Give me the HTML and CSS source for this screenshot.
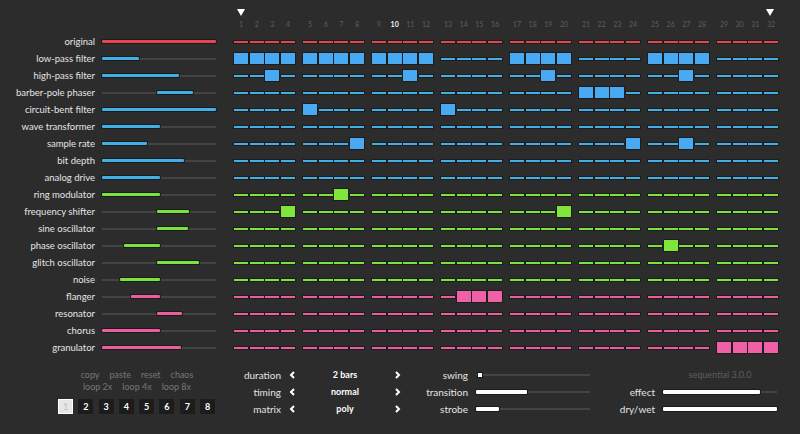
FILE: index.html
```html
<!DOCTYPE html>
<html>
<head>
  <title>Sequential 3.0.0</title>
  <meta charset="UTF-8" />
  <meta name="viewport" content="width=device-width, initial-scale=1.0" />
  <link rel="stylesheet" href="styles.css">
</head>
<body>
  <div class="app">
    <!-- playhead markers and step numbers -->
    <div class="head">
      <div class="markers">
        <svg class="marker" width="8" height="7" viewBox="0 0 8 7"><polygon points="0,0 8,0 4,7" /></svg>
        <svg class="marker" width="8" height="7" viewBox="0 0 8 7"><polygon points="0,0 8,0 4,7" /></svg>
      </div>
      <div class="steps numbers" id="numbers"></div>
    </div>

    <!-- effect rows are built by the script below -->
    <div id="rows"></div>

    <div class="bottom">
      <div class="actions">
        <div class="links"><span>copy</span><span>paste</span><span>reset</span><span>chaos</span></div>
        <div class="links"><span>loop 2x</span><span>loop 4x</span><span>loop 8x</span></div>
        <div class="banks">
          <button class="bank on">1</button>
          <button class="bank">2</button>
          <button class="bank">3</button>
          <button class="bank">4</button>
          <button class="bank">5</button>
          <button class="bank">6</button>
          <button class="bank">7</button>
          <button class="bank">8</button>
        </div>
      </div>

      <div class="options">
        <span class="lbl">duration</span>
        <svg class="arrow" width="6" height="8" viewBox="0 0 6 8"><polyline points="5,1 2,4 5,7" /></svg>
        <span class="val">2 bars</span>
        <svg class="arrow" width="6" height="8" viewBox="0 0 6 8"><polyline points="1,1 4,4 1,7" /></svg>

        <span class="lbl">timing</span>
        <svg class="arrow" width="6" height="8" viewBox="0 0 6 8"><polyline points="5,1 2,4 5,7" /></svg>
        <span class="val">normal</span>
        <svg class="arrow" width="6" height="8" viewBox="0 0 6 8"><polyline points="1,1 4,4 1,7" /></svg>

        <span class="lbl">matrix</span>
        <svg class="arrow" width="6" height="8" viewBox="0 0 6 8"><polyline points="5,1 2,4 5,7" /></svg>
        <span class="val">poly</span>
        <svg class="arrow" width="6" height="8" viewBox="0 0 6 8"><polyline points="1,1 4,4 1,7" /></svg>
      </div>

      <div class="mix">
        <span class="lbl">swing</span>
        <div class="track"><div class="knob"></div></div>
        <span class="lbl">transition</span>
        <div class="track"><div class="fill" style="width: 51px"></div></div>
        <span class="lbl">strobe</span>
        <div class="track"><div class="fill" style="width: 23px"></div></div>
      </div>

      <div class="mix out">
        <span class="lbl"></span>
        <span class="version">sequential 3.0.0</span>
        <span class="lbl">effect</span>
        <div class="track"><div class="fill" style="width: 97px"></div></div>
        <span class="lbl">dry/wet</span>
        <div class="track"><div class="fill" style="width: 114px"></div></div>
      </div>
    </div>
  </div>

  <script>
    // name, colour, slider offset, slider width, active steps
    const effects = [
      ["original", "red", 0, 114, []],
      ["low-pass filter", "blue", 0, 37, [1,2,3,4,5,6,7,8,9,10,11,12,17,18,19,20,25,26,27,28]],
      ["high-pass filter", "blue", 0, 77, [3,11,19,27]],
      ["barber-pole phaser", "blue", 55, 36, [21,22,23]],
      ["circuit-bent filter", "blue", 0, 114, [5,13]],
      ["wave transformer", "blue", 0, 58, []],
      ["sample rate", "blue", 0, 45, [8,24,27]],
      ["bit depth", "blue", 0, 82, []],
      ["analog drive", "blue", 0, 58, []],
      ["ring modulator", "green", 0, 58, [7]],
      ["frequency shifter", "green", 55, 32, [4,20]],
      ["sine oscillator", "green", 55, 31, []],
      ["phase oscillator", "green", 22, 36, [26]],
      ["glitch oscillator", "green", 55, 42, []],
      ["noise", "green", 18, 40, []],
      ["flanger", "pink", 29, 29, [14,15,16]],
      ["resonator", "pink", 55, 25, []],
      ["chorus", "pink", 0, 58, []],
      ["granulator", "pink", 0, 79, [29,30,31,32]]
    ];

    const rows = document.getElementById("rows");
    const numbers = document.getElementById("numbers");

    // step numbers, grouped in fours like the grid
    for (let g = 0; g < 8; g++) {
      const group = document.createElement("div");
      group.className = "group";
      for (let s = 1; s <= 4; s++) {
        const n = document.createElement("span");
        n.textContent = g * 4 + s;
        if (g * 4 + s === 10) n.className = "current";
        group.appendChild(n);
      }
      numbers.appendChild(group);
    }

    effects.forEach(([name, colour, offset, width, active]) => {
      const row = document.createElement("div");
      row.className = "row " + colour;

      const label = document.createElement("span");
      label.className = "name";
      label.textContent = name;
      row.appendChild(label);

      const track = document.createElement("div");
      track.className = "track";
      const fill = document.createElement("div");
      fill.className = "fill";
      fill.style.marginLeft = offset + "px";
      fill.style.width = width + "px";
      track.appendChild(fill);
      row.appendChild(track);

      const steps = document.createElement("div");
      steps.className = "steps";
      for (let g = 0; g < 8; g++) {
        const group = document.createElement("div");
        group.className = "group";
        for (let s = 1; s <= 4; s++) {
          const step = document.createElement("div");
          step.className = active.includes(g * 4 + s) ? "step on" : "step";
          group.appendChild(step);
        }
        steps.appendChild(group);
      }
      row.appendChild(steps);

      rows.appendChild(row);
    });
  </script>
</body>
</html>
```

FILE: styles.css
```css
body {
  margin: 0;
  background: #2c2c2c;
  font-family: Lato, "Open Sans", sans-serif;
  color: #e2e2e2;
}
.app {
  width: 800px;
  height: 434px;
  overflow: hidden;
}

/* header above the step grid */
.head {
  margin-left: 234px;
  width: 544px;
  height: 33px;
  padding-top: 9px;
  box-sizing: border-box;
}
.markers {
  display: flex;
  justify-content: space-between;
  padding: 0 4px 0 3px;
  height: 7px;
}
.marker polygon {
  fill: #fff;
}
.numbers {
  margin-top: 4px;
  margin-left: 0 !important;
  height: 9px;
}
.numbers span {
  font-size: 7px;
  line-height: 9px;
  text-align: center;
  color: #5e5e5e;
}
.numbers .current {
  color: #f2f2f2;
  font-weight: bold;
}

/* effect rows */
.row {
  display: flex;
  align-items: center;
  height: 17px;
}
.name {
  width: 95px;
  text-align: right;
  font-size: 9.5px;
  color: #e4e4e4;
}
.track {
  display: flex;
  align-items: center;
  width: 114px;
  height: 2px;
  background: #444;
}
.row .track {
  margin-left: 7px;
}
.fill {
  height: 3px;
  border-radius: 1px;
  background: #fff;
  box-shadow: 0 0 0 1px #1b1b1b;
}
.steps {
  display: flex;
  gap: 8px;
  margin-left: 18px;
}
.group {
  display: grid;
  grid-template-columns: repeat(4, 1fr);
  align-items: center;
  gap: 1.6px;
  width: 61px;
}
.step {
  height: 2px;
  background: var(--c);
  box-shadow: 0 0 0 1px #1d1d1d;
}
.step.on {
  height: 11px;
  background: var(--cell);
}
.row .fill {
  background: var(--c);
}

.red { --c: #e4454f; --cell: #e4454f; }
.blue { --c: #40b0e6; --cell: #4aa9f3; }
.green { --c: #7ce23e; --cell: #80e63c; }
.pink { --c: #ec5d9f; --cell: #f060a6; }

/* bottom controls */
.bottom {
  display: flex;
  margin-top: 10px;
  padding-left: 58px;
}
.actions {
  width: 158px;
  padding-top: 3px;
}
.links {
  display: flex;
  justify-content: center;
  gap: 10px;
  font-size: 9px;
  line-height: 12px;
  color: #777;
}
.banks {
  display: flex;
  gap: 5.3px;
  margin-top: 6px;
}
.bank {
  width: 15px;
  height: 15px;
  padding: 0;
  border: none;
  background: #1c1c1c;
  color: #fff;
  font-family: Lato, sans-serif;
  font-size: 9px;
  font-weight: bold;
}
.bank.on {
  background: #e6e6e6;
  border: 1px solid #fff;
  color: #c8c8c8;
}

.options {
  display: grid;
  grid-template-columns: 55px 22px 84px 22px;
  grid-auto-rows: 17px;
  align-items: center;
  justify-items: center;
  margin-left: 10px;
}
.lbl {
  justify-self: end;
  font-size: 10px;
  color: #e4e4e4;
}
.arrow polyline {
  fill: none;
  stroke: #fff;
  stroke-width: 2;
}
.val {
  font-size: 9px;
  font-weight: bold;
  color: #fff;
}

.mix {
  display: grid;
  grid-template-columns: 59px 114px;
  grid-auto-rows: 17px;
  align-items: center;
  column-gap: 8px;
}
.mix.out {
  grid-template-columns: 65px 114px;
}
.mix .fill {
  height: 4px;
}
.knob {
  width: 4px;
  height: 4px;
  margin-left: 2px;
  background: #fff;
  box-shadow: 0 0 0 1px #1b1b1b;
}
.version {
  justify-self: center;
  font-size: 9px;
  color: #5e5e5e;
}
```
